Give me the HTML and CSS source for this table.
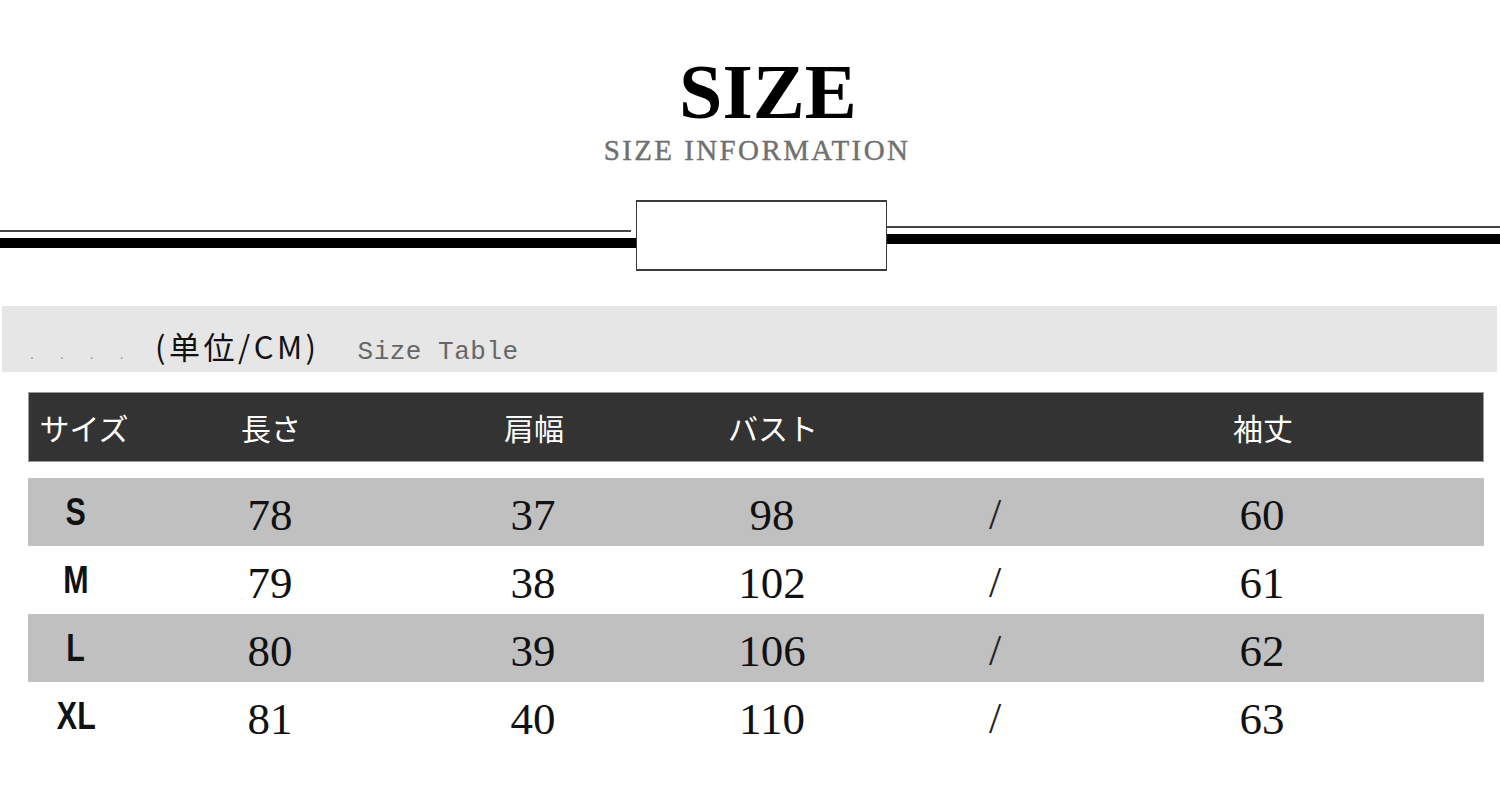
FILE: index.html
```html
<!DOCTYPE html>
<html lang="ja">
<head>
<meta charset="utf-8">
<title>SIZE</title>
<link rel="stylesheet" href="styles.css">
</head>
<body>
<div class="page">
  <header class="title">
    <h1 class="t-main">SIZE</h1>
    <p class="t-sub">SIZE INFORMATION</p>
  </header>

  <div class="divider">
    <div class="rule rule-left"><span class="thin"></span><span class="thick"></span></div>
    <div class="dbox"></div>
    <div class="rule rule-right"><span class="thin"></span><span class="thick"></span></div>
  </div>

  <div class="banner">
    <span class="dots">....</span>
    <span class="unit">(单位/CM)</span>
    <span class="stable">Size Table</span>
  </div>

  <div class="table">
    <div class="row head">
      <span class="h">サイズ</span>
      <span class="h">長さ</span>
      <span class="h">肩幅</span>
      <span class="h">バスト</span>
      <span class="h"></span>
      <span class="h">袖丈</span>
      <span></span>
    </div>
    <div class="row data gray">
      <span class="szc"><span class="sz">S</span></span><span class="num">78</span><span class="num">37</span><span class="num">98</span><span class="num sl">/</span><span class="num">60</span><span></span>
    </div>
    <div class="row data">
      <span class="szc"><span class="sz">M</span></span><span class="num">79</span><span class="num">38</span><span class="num">102</span><span class="num sl">/</span><span class="num">61</span><span></span>
    </div>
    <div class="row data gray">
      <span class="szc"><span class="sz">L</span></span><span class="num">80</span><span class="num">39</span><span class="num">106</span><span class="num sl">/</span><span class="num">62</span><span></span>
    </div>
    <div class="row data">
      <span class="szc"><span class="sz">XL</span></span><span class="num">81</span><span class="num">40</span><span class="num">110</span><span class="num sl">/</span><span class="num">63</span><span></span>
    </div>
  </div>
</div>
</body>
</html>
```

FILE: styles.css
```css
html, body {
  margin: 0;
  padding: 0;
  background: #ffffff;
}

.page {
  width: 1500px;
}

.title {
  padding-top: 53px;
  text-align: center;
}

.t-main {
  margin: 0;
  padding-left: 36px;
  font: bold 78px/1 "Liberation Serif", serif;
  color: #000;
}

.t-sub {
  margin: 5px 0 0;
  padding-left: 14px;
  font: 29px/1 "Liberation Serif", serif;
  letter-spacing: 2.4px;
  color: #707070;
  -webkit-text-stroke: 0.4px #707070;
}

.divider {
  display: flex;
  margin-top: 35px;
  height: 71px;
}

.rule {
  display: flex;
  flex-direction: column;
  box-sizing: border-box;
}

.rule-left {
  width: 636px;
  padding-top: 30px;
}

.rule-right {
  flex: 1;
  padding-top: 26px;
}

.thin {
  display: block;
  height: 2px;
  background: #444;
}

.rule-left .thin {
  margin-right: 5px;
}

.thick {
  display: block;
  height: 10px;
  margin-top: 6px;
  background: #000;
}

.dbox {
  width: 251px;
  box-sizing: border-box;
  border: 2px solid #3a3a3a;
  border-left-width: 1px;
  border-right-width: 1px;
  background: #fff;
}

.banner {
  display: flex;
  align-items: baseline;
  box-sizing: border-box;
  height: 66px;
  margin: 35px 3px 0 2px;
  padding: 21px 0 0 28px;
  background: #e6e6e6;
}

.dots {
  width: 125px;
  font: 14px/1 "Liberation Sans", sans-serif;
  letter-spacing: 26px;
  color: #8a8a8a;
}

.unit {
  font: 31px/1.2 "Noto Sans CJK SC", sans-serif;
  letter-spacing: 3.5px;
  color: #111;
}

.stable {
  margin-left: 38px;
  font: 26px/1 "Liberation Mono", monospace;
  letter-spacing: 0.5px;
  color: #666;
}

.table {
  width: 1456px;
  margin: 20px 0 0 28px;
}

.row {
  display: grid;
  grid-template-columns: 104px 276px 250px 228px 218px 316px 1fr;
  align-items: center;
  text-align: center;
}

.head {
  height: 70px;
  box-sizing: border-box;
  background: #333;
  border: 1px solid #9a9a9a;
  margin-bottom: 16px;
}

.h {
  font: 30px/1 "Noto Sans CJK JP", sans-serif;
  color: #fff;
}

.head .h:first-child {
  padding-left: 6px;
}

.data {
  height: 68px;
}

.gray {
  background: #c0c0c0;
}

.szc {
  display: block;
  padding-right: 8px;
}

.sz {
  display: inline-block;
  font: bold 38px/1 "Liberation Sans", sans-serif;
  color: #111;
  transform: scaleX(0.8);
}

.num {
  padding-top: 6px;
  font: 45px/1 "Liberation Serif", serif;
  color: #111;
}

.sl {
  font-size: 44px;
  color: #222;
}
```
